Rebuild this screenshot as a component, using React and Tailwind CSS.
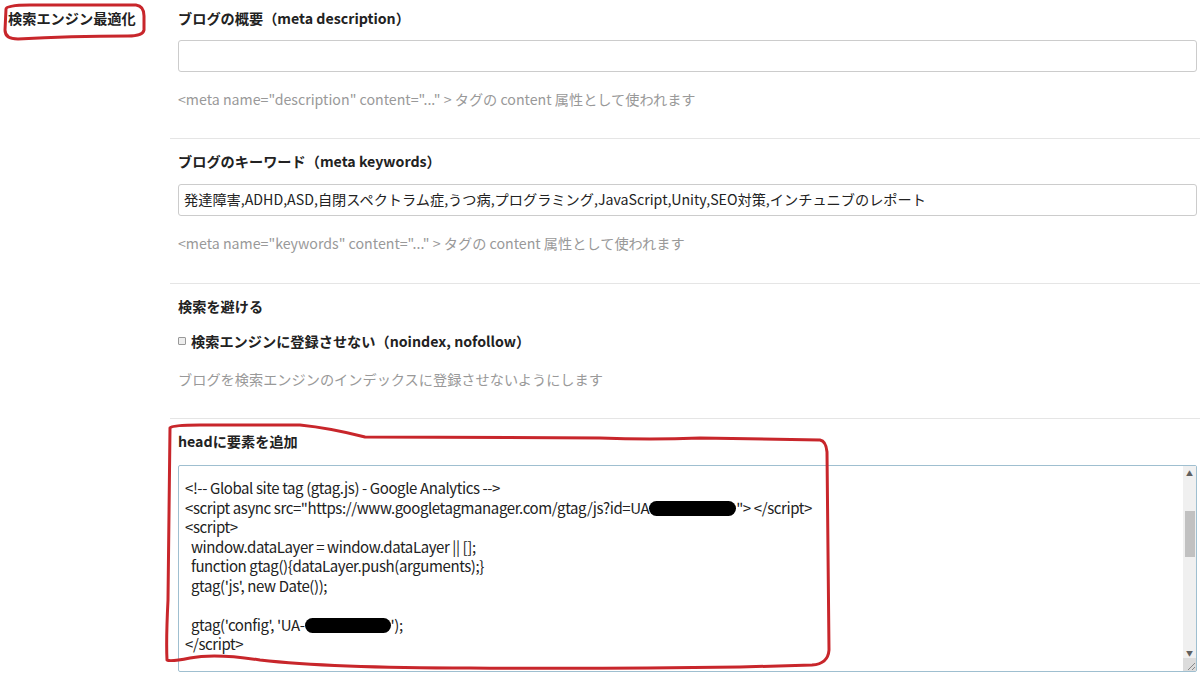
import React from 'react';

const font = { fontFamily: '"Noto Sans CJK JP", "Noto Sans", sans-serif' };

function Redacted({ w }) {
  return <span className={`inline-block h-[15px] align-[-2px] rounded-full bg-black ${w}`} />;
}

function Section({ title, children, first, last }) {
  return (
    <div className={`pl-2 ${first ? 'pt-2' : 'pt-[12px]'} ${last ? '' : 'border-b border-[#e5e5e5]'}`}>
      <h3 className="text-[14.2px] font-bold text-[#222] leading-5">{title}</h3>
      {children}
    </div>
  );
}

function Help({ children, mt = 'mt-[17px]' }) {
  return <p className={`${mt} text-[14.2px] text-[#999] leading-5`}>{children}</p>;
}

function Annotations() {
  return (
    <svg className="pointer-events-none absolute inset-0" width="1200" height="676" viewBox="0 0 1200 676">
      <g fill="none" stroke="#c8262b" strokeWidth="3" strokeLinecap="round" strokeLinejoin="round">
        <path d="M6 9 Q6 5 30 5 L136 5 Q144 6 144 16 L144 30 Q143 36 128 36 Q70 36 18 39 Q5 39 5 30 Z" />
        <path d="M170 428 Q172 425 200 425 L300 425 Q330 428 365 437 L600 438 Q650 440 700 438 L820 440 Q826 441 827 452 L829 650 Q828 664 812 665 L740 667 Q600 669 470 668 Q330 668 260 660 Q215 653 190 658 Q170 662 167 660 Q166 640 168 600 L170 428" />
      </g>
    </svg>
  );
}

export default function App() {
  return (
    <div className="relative w-[1200px] h-[676px] overflow-hidden bg-white text-[#222]" style={font}>
      <div className="flex">
        <div className="w-[170px] shrink-0 pl-2 pt-2">
          <h2 className="text-[14.2px] font-bold leading-5">検索エンジン最適化</h2>
        </div>
        <div className="flex-1">
          <Section title="ブログの概要（meta description）" first>
            <div className="mt-[12px] h-[32px] mr-[3px] rounded-[3px] border border-[#ccc] bg-white" />
            <Help>&lt;meta name="description" content="..." &gt; タグの content 属性として使われます</Help>
            <div className="h-[29px]" />
          </Section>
          <Section title="ブログのキーワード（meta keywords）">
            <div className="mt-[13px] h-[32px] mr-[3px] rounded-[3px] border border-[#ccc] bg-white px-[5px] flex items-center text-[14.2px] whitespace-nowrap overflow-hidden">
              発達障害,ADHD,ASD,自閉スペクトラム症,うつ病,プログラミング,JavaScript,Unity,SEO対策,インチュニブのレポート
            </div>
            <Help>&lt;meta name="keywords" content="..." &gt; タグの content 属性として使われます</Help>
            <div className="h-[30px]" />
          </Section>
          <Section title="検索を避ける">
            <label className="mt-[15px] flex items-center gap-[5px] text-[14.2px] font-bold leading-5">
              <span className="inline-block w-[8px] h-[8px] rounded-[1px] border border-[#999] bg-[#eee]" />
              検索エンジンに登録させない（noindex, nofollow）
            </label>
            <Help mt="mt-[18px]">ブログを検索エンジンのインデックスに登録させないようにします</Help>
            <div className="h-[29px]" />
          </Section>
          <Section title="headに要素を追加" last>
            <div className="mt-[14px] mr-[3px] h-[207px] flex border border-[#9fbfd0] rounded-[2px] bg-white">
              <div className="flex-1 pl-[6px] pt-[12px] text-[15px] leading-[19.5px] tracking-[-0.4px] whitespace-pre text-[#222]">
                <div>{'<!-- Global site tag (gtag.js) - Google Analytics -->'}</div>
                <div>
                  {'<script async src="https://www.googletagmanager.com/gtag/js?id=UA'}
                  <Redacted w="w-[87px]" />
                  {'"> </script>'}
                </div>
                <div>{'<script>'}</div>
                <div>{'  window.dataLayer = window.dataLayer || [];'}</div>
                <div>{'  function gtag(){dataLayer.push(arguments);}'}</div>
                <div>{"  gtag('js', new Date());"}</div>
                <div>&nbsp;</div>
                <div>
                  {"  gtag('config', 'UA-"}
                  <Redacted w="w-[86px]" />
                  {"');"}
                </div>
                <div>{'</script>'}</div>
              </div>
              <div className="w-[13px] bg-[#f0f0f0] flex flex-col items-center relative">
                <span className="mt-[4px] text-[7px] leading-none text-[#606060]">▲</span>
                <div className="mt-[34px] w-[10px] h-[46px] bg-[#c1c1c1]" />
                <div className="flex-1" />
                <span className="mb-[14px] text-[7px] leading-none text-[#606060]">▼</span>
                <div className="absolute bottom-0 right-0 w-[13px] h-[13px] bg-[#dcdcdc]">
                  <svg width="13" height="13" viewBox="0 0 13 13">
                    <path d="M12 5 L5 12 M12 9 L9 12" stroke="#888" strokeWidth="1" />
                  </svg>
                </div>
              </div>
            </div>
          </Section>
        </div>
      </div>
      <Annotations />
    </div>
  );
}
